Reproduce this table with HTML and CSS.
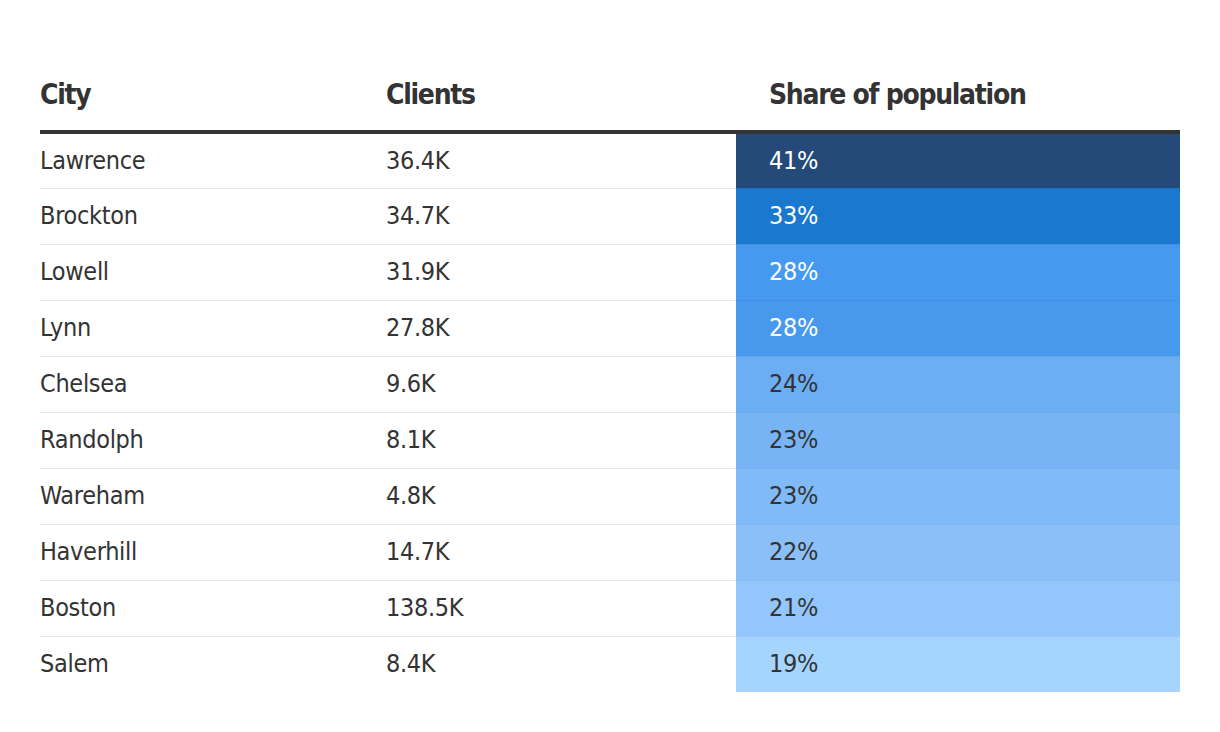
FILE: index.html
```html
<!DOCTYPE html>
<html lang="en">
<head>
<meta charset="utf-8">
<title>Share of population</title>
<link rel="stylesheet" href="styles.css">
</head>
<body>
<table class="data-table">
  <thead>
    <tr>
      <th class="col-city">City</th>
      <th class="col-clients">Clients</th>
      <th class="col-share">Share of population</th>
    </tr>
  </thead>
  <tbody>
    <tr><td>Lawrence</td><td>36.4K</td><td class="share s1">41%</td></tr>
    <tr><td>Brockton</td><td>34.7K</td><td class="share s2">33%</td></tr>
    <tr><td>Lowell</td><td>31.9K</td><td class="share s3">28%</td></tr>
    <tr><td>Lynn</td><td>27.8K</td><td class="share s4">28%</td></tr>
    <tr><td>Chelsea</td><td>9.6K</td><td class="share s5">24%</td></tr>
    <tr><td>Randolph</td><td>8.1K</td><td class="share s6">23%</td></tr>
    <tr><td>Wareham</td><td>4.8K</td><td class="share s7">23%</td></tr>
    <tr><td>Haverhill</td><td>14.7K</td><td class="share s8">22%</td></tr>
    <tr><td>Boston</td><td>138.5K</td><td class="share s9">21%</td></tr>
    <tr><td>Salem</td><td>8.4K</td><td class="share s10">19%</td></tr>
  </tbody>
</table>
</body>
</html>
```

FILE: styles.css
```css
html, body {
  margin: 0;
  padding: 0;
  background: #ffffff;
}

body {
  padding: 61px 40px 0 40px;
  font-family: "DejaVu Sans", sans-serif;
  font-stretch: condensed;
  color: #333333;
}

.data-table {
  width: 1140px;
  border-collapse: collapse;
  table-layout: fixed;
}

.data-table th {
  height: 71px;
  box-sizing: border-box;
  vertical-align: bottom;
  text-align: left;
  font-size: 28px;
  font-weight: 700;
  letter-spacing: -1.3px;
  line-height: 32px;
  padding: 0 0 19px 0;
  border-bottom: 4px solid #333333;
  color: #333333;
}

.col-city { width: 346px; }
.col-clients { width: 350px; }
.col-share { width: 444px; }

.data-table th.col-share,
.data-table td.share {
  padding-left: 33px;
}

.data-table td {
  height: 56px;
  box-sizing: border-box;
  padding: 0;
  vertical-align: middle;
  font-size: 25px;
  font-weight: 400;
  letter-spacing: -0.3px;
  line-height: 30px;
  border-bottom: 1px solid #e8e8e8;
}

.data-table tbody tr:last-child td {
  border-bottom: none;
}

.data-table td.share {
  border-bottom: 1px solid rgba(0, 0, 0, 0.05);
}

.data-table tbody tr:last-child td.share {
  border-bottom: none;
}

.s1 { background: #254a7a; color: #ffffff; }
.s2 { background: #1a78cf; color: #ffffff; }
.s3 { background: #4699ee; color: #ffffff; }
.s4 { background: #4899ee; color: #ffffff; }
.s5 { background: #6caef4; }
.s6 { background: #78b3f6; }
.s7 { background: #80baf8; }
.s8 { background: #8bbff8; }
.s9 { background: #93c6fb; }
.s10 { background: #a5d5fe; }
```
